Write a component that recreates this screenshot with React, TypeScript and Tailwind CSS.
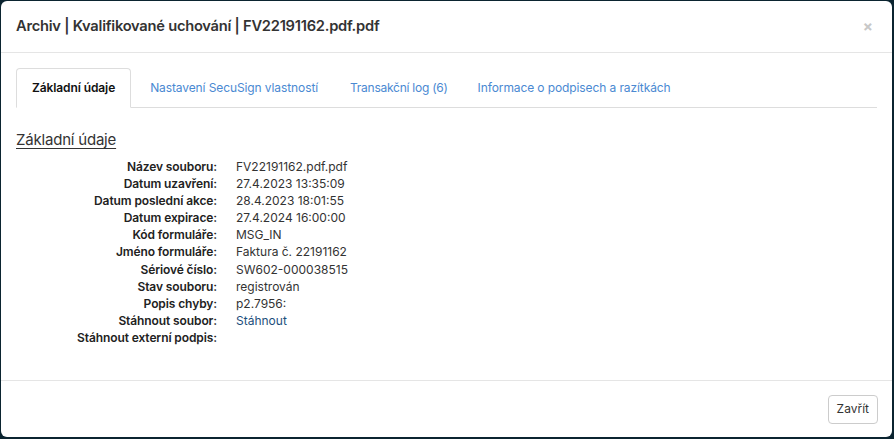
import React from 'react'

const rows: [string, string, boolean?][] = [
  ['Název souboru:', 'FV22191162.pdf.pdf'],
  ['Datum uzavření:', '27.4.2023 13:35:09'],
  ['Datum poslední akce:', '28.4.2023 18:01:55'],
  ['Datum expirace:', '27.4.2024 16:00:00'],
  ['Kód formuláře:', 'MSG_IN'],
  ['Jméno formuláře:', 'Faktura č. 22191162'],
  ['Sériové číslo:', 'SW602-000038515'],
  ['Stav souboru:', 'registrován'],
  ['Popis chyby:', 'p2.7956:'],
  ['Stáhnout soubor:', 'Stáhnout', true],
  ['Stáhnout externí podpis:', ''],
]

export default function App() {
  return (
    <div className="w-[894px] h-[439px] bg-[#0b2430] pt-[1px] pl-[1px] font-['Inter',sans-serif] text-[#333]">
      <div className="w-[891px] h-[436px] bg-white rounded-[6px] flex flex-col">
        <div className="h-[52px] border-b border-[#e5e5e5] flex items-center justify-between pl-[15px] pr-[19px]">
          <h4 className="text-[14.7px] font-semibold tracking-[-0.25px] text-[#333]">
            Archiv | Kvalifikované uchování | FV22191162.pdf.pdf
          </h4>
          <button className="text-[#c8c8c8] text-[15px] leading-none font-bold">×</button>
        </div>

        <div className="flex-1 pt-[15px] pl-[15px] pr-[15px]">
          <ul className="flex border-b border-[#ddd] text-[12px] tracking-[-0.1px]">
            <li className="-mb-px mr-[4px] h-[40px] px-[15px] flex items-center border border-[#ddd] border-b-white rounded-t-[4px] bg-white font-semibold text-[#111]">
              Základní údaje
            </li>
            <li className="mr-[2px] h-[39px] px-[15px] flex items-center text-[#4a89d2]">
              Nastavení SecuSign vlastností
            </li>
            <li className="h-[39px] px-[15px] flex items-center text-[#4a89d2] tracking-[-0.25px]">
              Transakční log (6)
            </li>
            <li className="h-[39px] px-[15px] flex items-center text-[#4a89d2]">
              Informace o podpisech a razítkách
            </li>
          </ul>

          <h3 className="mt-[22px] text-[15px] tracking-[-0.2px] underline underline-offset-[3px] text-[#333] leading-[20px]">
            Základní údaje
          </h3>

          <div className="mt-[8px] text-[12px] leading-[17.1px]">
            {rows.map(([label, value, link]) => (
              <div key={label} className="flex">
                <div className="w-[201px] text-right font-semibold tracking-[-0.1px] text-[#222]">{label}</div>
                <div className={`ml-[19px] ${link ? 'text-[#1d4f7c]' : 'text-[#333]'}`}>{value}</div>
              </div>
            ))}
          </div>
        </div>

        <div className="h-[57px] border-t border-[#e5e5e5] flex items-center justify-end pr-[14px]">
          <button className="h-[29px] px-[8px] border border-[#ccc] rounded-[4px] text-[12px] text-[#333] bg-white">
            Zavřít
          </button>
        </div>
      </div>
    </div>
  )
}
